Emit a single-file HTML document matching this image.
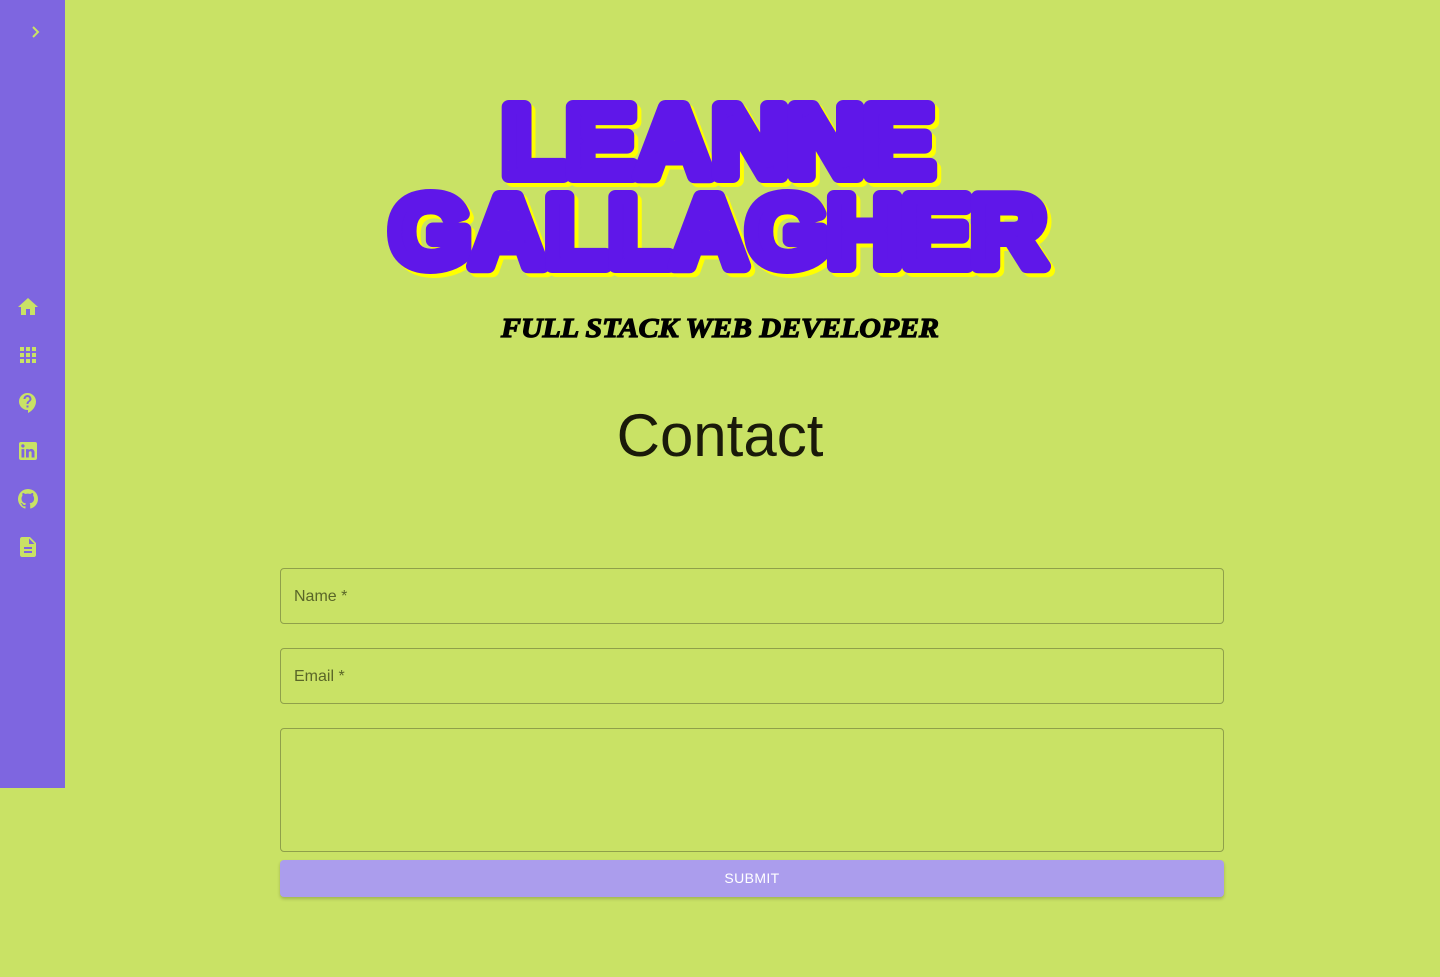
<!DOCTYPE html>
<html><head><meta charset="utf-8"><style>
body{margin:0;width:1440px;height:977px;background:#c9e265;font-family:"Liberation Sans",sans-serif;position:relative;overflow:hidden}
.side{position:absolute;left:0;top:0;width:65px;height:788px;background:#7e66e0}
.ic{position:absolute;left:16px;width:24px;height:24px}
.f{position:absolute;left:280px;width:942px;border:1px solid #8fa04a;border-radius:4px}
.f span{position:absolute;left:13px;top:19px;font-size:16px;color:#5a6628}
.btn{position:absolute;left:280px;top:860px;width:944px;height:37px;background:#ab9ded;border-radius:4px;color:#fff;font-size:14px;text-align:center;line-height:37px;box-shadow:0 2px 3px rgba(0,0,0,.2);letter-spacing:.4px}
</style></head><body>
<div class="side">
<svg style="position:absolute;left:28px;top:24px" width="16" height="16" viewBox="0 0 16 16"><path d="M5 3l5 5-5 5" stroke="#c9e265" stroke-width="2" fill="none"/></svg>
<svg class="ic" style="top:295px" viewBox="0 0 24 24" fill="#c9e265"><path d="M10 20v-6h4v6h5v-8h3L12 3 2 12h3v8z"/></svg>
<svg class="ic" style="top:343px" viewBox="0 0 24 24" fill="#c9e265"><path d="M4 8h4V4H4zm6 12h4v-4h-4zm-6 0h4v-4H4zm0-6h4v-4H4zm6 0h4v-4h-4zm6-10v4h4V4zm-6 4h4V4h-4zm6 6h4v-4h-4zm0 6h4v-4h-4z"/></svg>
<svg class="ic" style="top:391px" viewBox="0 0 24 24" fill="#c9e265"><path d="M11.5 2C6.8 2 3 5.8 3 10.5S6.8 19 11.5 19h.5v3c4.9-2.3 8-7 8-11.5C20 5.8 16.2 2 11.5 2zm1 14.5h-2v-2h2zm0-3.5h-2c0-3.2 3-3 3-5 0-1.1-.9-2-2-2s-2 .9-2 2h-2c0-2.2 1.8-4 4-4s4 1.8 4 4c0 2.5-3 2.8-3 5z"/></svg>
<svg class="ic" style="top:439px" viewBox="0 0 24 24" fill="#c9e265"><path d="M19 3a2 2 0 0 1 2 2v14a2 2 0 0 1-2 2H5a2 2 0 0 1-2-2V5a2 2 0 0 1 2-2zm-.5 15.5v-5.3a3.3 3.3 0 0 0-3.3-3.3c-.9 0-1.9.5-2.4 1.3v-1.1h-2.8v8.4h2.8v-4.9c0-.8.6-1.4 1.4-1.4a1.4 1.4 0 0 1 1.4 1.4v4.9zM6.9 8.6a1.7 1.7 0 0 0 1.7-1.7c0-.9-.8-1.700-1.7-1.7a1.7 1.7 0 0 0-1.7 1.7c0 .9.8 1.7 1.7 1.7zm1.4 9.9v-8.4H5.5v8.4z"/></svg>
<svg class="ic" style="top:487px" viewBox="0 0 24 24" fill="#c9e265"><path d="M12 2A10 10 0 0 0 2 12c0 4.4 2.9 8.2 6.8 9.5.5.1.7-.2.7-.5v-1.7c-2.8.6-3.4-1.3-3.4-1.3-.5-1.2-1.1-1.5-1.1-1.5-.9-.6.1-.6.1-.6 1 .1 1.500 1 1.5 1 .9 1.5 2.3 1.1 2.9.8.1-.6.3-1.1.6-1.3-2.2-.3-4.6-1.1-4.6-5 0-1.1.4-2 1-2.7-.1-.3-.4-1.3.1-2.7 0 0 .8-.3 2.7 1a9.4 9.4 0 0 1 5 0c1.9-1.3 2.7-1 2.7-1 .5 1.4.2 2.4.1 2.7.6.7 1 1.6 1 2.7 0 3.8-2.3 4.7-4.6 4.9.4.3.7.9.7 1.9V21c0 .3.2.6.7.5A10 10 0 0 0 22 12 10 10 0 0 0 12 2z"/></svg>
<svg class="ic" style="top:535px" viewBox="0 0 24 24" fill="#c9e265"><path d="M14 2H6c-1.1 0-2 .9-2 2v16c0 1.1.9 2 2 2h12c1.1 0 2-.9 2-2V8zm2 16H8v-2h8zm0-4H8v-2h8zm-3-5V3.5L18.5 9z"/></svg>
</div>
<svg style="position:absolute;left:0;top:0" width="1440" height="400">
<g font-family="Liberation Sans" font-weight="bold" stroke-linejoin="round" stroke-width="14" text-anchor="start">
<text x="506" y="180" font-size="100" textLength="432" lengthAdjust="spacingAndGlyphs" fill="#ffff00" stroke="#ffff00">LEANNE</text>
<text x="502" y="176" font-size="100" textLength="432" lengthAdjust="spacingAndGlyphs" fill="#5f17e9" stroke="#5f17e9">LEANNE</text>
<text x="394" y="270" font-size="100" textLength="656" lengthAdjust="spacingAndGlyphs" fill="#ffff00" stroke="#ffff00">GALLAGHER</text>
<text x="390" y="266" font-size="100" textLength="656" lengthAdjust="spacingAndGlyphs" fill="#5f17e9" stroke="#5f17e9">GALLAGHER</text>
</g>
<text x="501" y="337" font-family="Liberation Serif" font-weight="bold" font-style="italic" font-size="27" textLength="438" lengthAdjust="spacingAndGlyphs" fill="#000" stroke="#000" stroke-width="1.2">FULL STACK WEB DEVELOPER</text>
</svg>
<div style="position:absolute;left:0;width:1440px;top:400px;text-align:center;font-size:60px;color:#1a1a0a;line-height:72px">Contact</div>
<div class="f" style="top:568px;height:54px"><span>Name *</span></div>
<div class="f" style="top:648px;height:54px"><span>Email *</span></div>
<div class="f" style="top:728px;height:122px"></div>
<div class="btn">SUBMIT</div>
</body></html>
